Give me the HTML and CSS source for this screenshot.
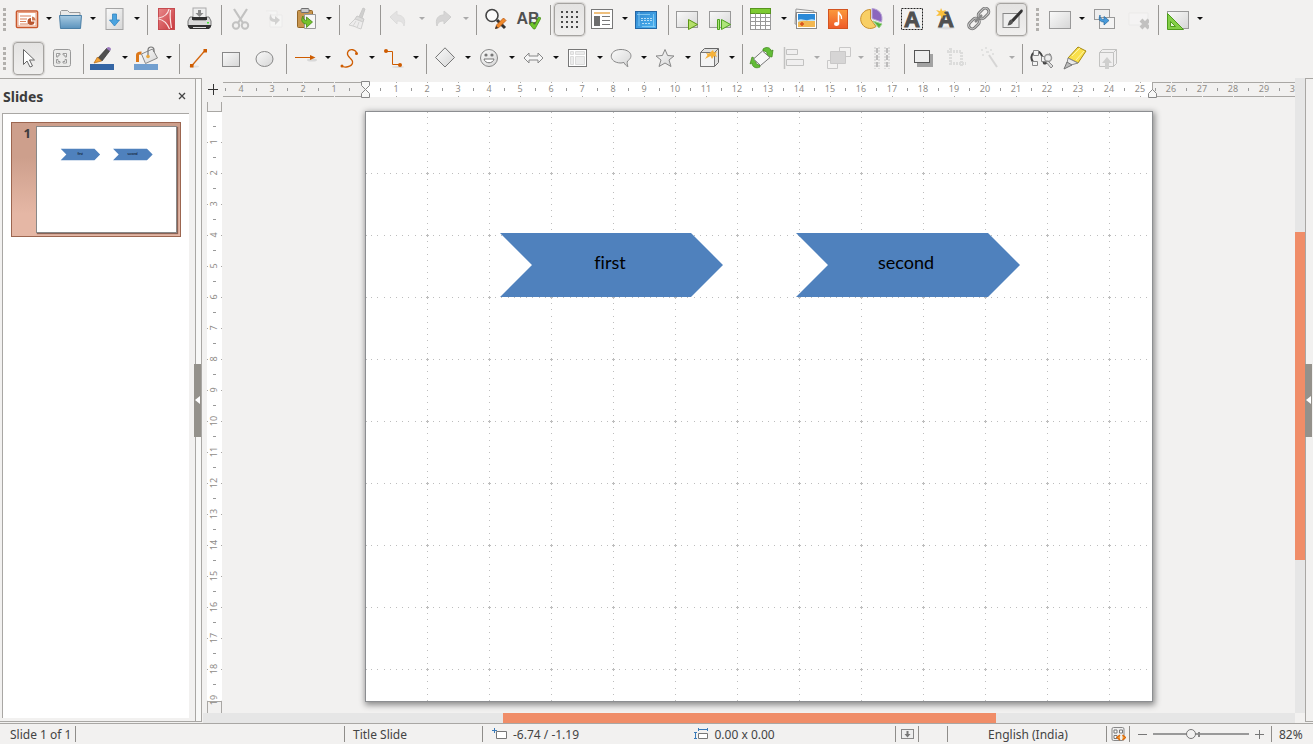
FILE: index.html
```html
<!DOCTYPE html>
<html lang="en">
<head>
<meta charset="utf-8">
<title>Presentation editor</title>
<link rel="stylesheet" href="styles.css">
</head>
<body>
<svg class="defs" aria-hidden="true">
  <defs>
    <linearGradient id="gGrey" x1="0" y1="0" x2="1" y2="1"><stop offset="0" stop-color="#fafafa"/><stop offset="1" stop-color="#d6d6d6"/></linearGradient>
    <linearGradient id="gBlue" x1="0" y1="0" x2="0" y2="1"><stop offset="0" stop-color="#a9cbe2"/><stop offset="1" stop-color="#5b93bd"/></linearGradient>
    <linearGradient id="gSky" x1="0" y1="0" x2="1" y2="1"><stop offset="0" stop-color="#2f86cf"/><stop offset="1" stop-color="#4db4f2"/></linearGradient>
    <linearGradient id="gRed" x1="0" y1="0" x2="1" y2="1"><stop offset="0" stop-color="#e8888a"/><stop offset="1" stop-color="#c8373c"/></linearGradient>
    <linearGradient id="gOrange" x1="0" y1="0" x2="0" y2="1"><stop offset="0" stop-color="#fb9a3c"/><stop offset="1" stop-color="#ee5a28"/></linearGradient>
    <pattern id="grid" x="-1" y="-1" width="62" height="62" patternUnits="userSpaceOnUse">
      <path fill="#bdbdbd" shape-rendering="crispEdges" d="M0 0h2v1H0zM61 0h1v1h-1zM0 1h1v1H0zM0 61h1v1H0zM6 0h1v1H6zM12 0h1v1h-1zM19 0h1v1h-1zM25 0h1v1h-1zM31 0h1v1h-1zM37 0h1v1h-1zM43 0h1v1h-1zM50 0h1v1h-1zM56 0h1v1h-1zM0 6h1v1H0zM0 12h1v1H0zM0 19h1v1H0zM0 25h1v1H0zM0 31h1v1H0zM0 37h1v1H0zM0 43h1v1H0zM0 50h1v1H0zM0 56h1v1H0z"/>
    </pattern>
  </defs>
</svg>

<header class="toolbars">
  <div class="row">
    <div class="group" role="toolbar" aria-label="Standard">
      <i class="grip"></i>
      <button class="tool" aria-label="New"><svg viewBox="0 0 25 24"><rect x="2.500" y="4" width="21" height="16.500" rx="1" fill="#fff" stroke="#c9572c" stroke-width="1.600"/><rect x="4" y="5.500" width="18" height="13.500" fill="none" stroke="#e9a181"/><path d="M6 9h11M6 12h7M6 14.500h6M6 17h8" stroke="#d9805a" stroke-width="1.200"/><path d="M17 11a3.500 3.500 0 1 0 3.500 3.500H17z" fill="#b9552f"/><path d="M18 9.500v4h3.500a4 4 0 0 0-3.500-4z" fill="#cf7a55"/></svg></button><button class="drop" aria-label="New options"></button>
      <button class="tool" aria-label="Open"><svg viewBox="0 0 25 24"><path d="M2.500 10V4.500l1-1h6l2 2h10.500V10" fill="#e9e9e8" stroke="#98999a"/><path d="M1.500 8.500h22l-1 13h-20z" fill="url(#gBlue)" stroke="#4b7fa6"/></svg></button><button class="drop" aria-label="Open options"></button>
      <button class="tool" aria-label="Save"><svg viewBox="0 0 25 24"><rect x="4" y="1.500" width="17" height="21" fill="url(#gGrey)" stroke="#a4a4a4"/><path d="M10.500 7h4v6h3l-5 6-5-6h3z" fill="#4aa3df" stroke="#2e84c1" stroke-width=".8"/></svg></button><button class="drop" aria-label="Save options"></button>
      <i class="sep"></i>
      <button class="tool" aria-label="Export as PDF"><svg viewBox="0 0 25 24"><rect x="4.500" y="1.500" width="16" height="21" fill="url(#gRed)" stroke="#c64b50"/><path d="M15 2c-1 5-5 8-10.500 9M4.500 12c6 1 9 5 11 10M16.500 3c-1 7 0 12 1 18" fill="none" stroke="#fbe4e4" stroke-width="1.200"/></svg></button>
      <button class="tool" aria-label="Print"><svg viewBox="0 0 25 24"><rect x="6" y="1" width="13" height="11" fill="#eee" stroke="#aaa"/><path d="M11 3h3v3h2.500l-4 4-4-4H11z" fill="#8b8b8b"/><path d="M3 10h3v3h13v-3h3l2 4v5H1v-5z" fill="#d9d9d9" stroke="#777"/><path d="M5 10h15v3H5z" fill="#2f2f2f"/><path d="M1 18h23v2l-2 2H3l-2-2z" fill="#333"/><path d="M6 20.500h13" stroke="#ddd"/><rect x="20" y="15" width="2" height="1.500" fill="#4ae03c"/></svg></button>
      <i class="sep"></i>
      <button class="tool off" aria-label="Cut"><svg viewBox="0 0 25 24"><path d="M6 2l9 14M19 2l-9 14" stroke="#777" stroke-width="2.200"/><circle cx="8" cy="18.500" r="3.200" fill="none" stroke="#777" stroke-width="2"/><circle cx="17" cy="18.500" r="3.200" fill="none" stroke="#777" stroke-width="2"/></svg></button>
      <button class="tool faint" aria-label="Copy"><svg viewBox="0 0 25 24"><path d="M5 4h11v6M9 8h12v12H9z" fill="#fff" stroke="#ddd"/><path d="M10 7c-3 5-1 8 4 8v3l5-5-5-4v3c-2 0-4-1-4-5z" fill="#888"/></svg></button>
      <button class="tool" aria-label="Paste"><svg viewBox="0 0 25 24"><rect x="3.500" y="3.500" width="15" height="17" rx="1" fill="#c8964e" stroke="#946627"/><rect x="7" y="1.500" width="8" height="4" rx="1" fill="#c9c9c9" stroke="#6f6f6f"/><path d="M10.500 7.500h11v14h-11z" fill="#f6f6f6" stroke="#999"/><path d="M9 9c-3 5 0 8 3.500 8v3.500l6-5.500-6-5v3.500C10.500 13.500 9 12 9 9z" fill="#74c22f" stroke="#428813" stroke-width=".8"/></svg></button><button class="drop" aria-label="Paste options"></button>
      <i class="sep"></i>
      <button class="tool off" aria-label="Clone formatting"><svg viewBox="0 0 25 24"><path d="M17 1l2 1-3 9-3-1z" fill="#999" stroke="#888"/><path d="M11 9l7 3-1 3-8-3z" fill="#bbb" stroke="#888"/><path d="M9 12l8 3-2 7-3-1-2-1-3-1-4-1z" fill="#e6e6e6" stroke="#999"/><path d="M10 14l-3 5M13 15l-2 6" stroke="#aaa"/></svg></button>
      <i class="sep"></i>
      <button class="tool off" aria-label="Undo"><svg viewBox="0 0 25 24"><path d="M3 10l7-6v4c6 0 9 4 7 11-1-4-3-5-7-5v3z" fill="#ccc" stroke="#bbb"/></svg></button><button class="drop dim" aria-label="Undo history"></button>
      <button class="tool off" aria-label="Redo"><svg viewBox="0 0 25 24"><path d="M20 10l-7-6v4C7 8 4 12 6 19c1-4 3-5 7-5v3z" fill="#aaa" stroke="#999"/></svg></button><button class="drop dim" aria-label="Redo history"></button>
      <i class="sep"></i>
      <button class="tool" aria-label="Find and replace"><svg viewBox="0 0 25 24"><circle cx="9" cy="8.500" r="6" fill="#fafafa" stroke="#444" stroke-width="1.600"/><path d="M14 13l8 8" stroke="#333" stroke-width="3"/><path d="M12.500 21.500l1-3.500 7-7 2.500 2.500-7 7z" fill="#f18a2b" stroke="#b95813" stroke-width=".8"/><path d="M12 22l1.200-3 2 2z" fill="#333"/></svg></button>
      <button class="tool" aria-label="Spelling"><svg viewBox="0 0 25 24"><text x="12" y="17" class="ab">AB</text><path d="M13.500 17l3-2 2 3 4-8 2.500 1-6 11h-1.500z" fill="#6ec52b" stroke="#3f8a12" stroke-width=".7"/></svg></button>
      <i class="sep"></i>
      <button class="tool on" aria-label="Display grid" aria-pressed="true"><svg viewBox="0 0 25 24"><path d="M4 5h18M4 10h18M4 15h18M4 20h18" stroke="#4a4a4a" stroke-width="2" stroke-dasharray="2 3"/></svg></button>
      <button class="tool" aria-label="Display views"><svg viewBox="0 0 25 24"><rect x="1.500" y="2.500" width="21" height="19" fill="#fff" stroke="#777"/><path d="M4 6h16" stroke="#efc07d" stroke-width="2"/><path d="M4 9h6v10H4z" fill="#6d6d6d"/><path d="M12 9.500h8M12 13.500h8M12 17.500h8" stroke="#777"/></svg></button><button class="drop" aria-label="View options"></button>
      <button class="tool" aria-label="Master slide"><svg viewBox="0 0 25 24"><rect x="1.500" y="4.500" width="21" height="17" fill="url(#gSky)" stroke="#2467a5"/><path d="M3 7.500h13M5 5v14M8 19.500h13M19.500 7v13" stroke="#8fd0f6" stroke-width=".8"/><path d="M7 11.500h11M7 13.500h11M8 16.500h8" stroke="#d5edfb" stroke-width=".8" stroke-dasharray="2 1"/></svg></button>
      <i class="sep"></i>
      <button class="tool" aria-label="Start from first slide"><svg viewBox="0 0 25 24"><rect x="1.500" y="4.500" width="21" height="16" fill="url(#gGrey)" stroke="#999"/><path d="M13.500 12.500v10l9-5z" fill="#b5e06a" stroke="#5c9614"/></svg></button>
      <button class="tool" aria-label="Start from current slide"><svg viewBox="0 0 25 24"><rect x="1.500" y="4.500" width="21" height="16" fill="url(#gGrey)" stroke="#999"/><path d="M9.500 12.500h2v10h-2zM13.500 12.500v10l9-5z" fill="#aee57b" stroke="#4da21f"/></svg></button>
      <i class="sep"></i>
      <button class="tool" aria-label="Insert table"><svg viewBox="0 0 25 24"><rect x="1.500" y="1.500" width="20" height="21" fill="#fff" stroke="#999"/><rect x="1.500" y="1.500" width="20" height="5" fill="#7dcb32" stroke="#57951f"/><path d="M2 10.500h20M2 14.500h20M2 18.500h20M6.500 6.500v16M11.500 6.500v16M16.500 6.500v16" stroke="#999"/></svg></button><button class="drop" aria-label="Table options"></button>
      <button class="tool" aria-label="Insert image"><svg viewBox="0 0 25 24"><path d="M3 2l18 2-1 15-18-2z" fill="#f4f4f4" stroke="#999"/><rect x="3.500" y="5.500" width="20" height="16" fill="#fff" stroke="#888"/><path d="M5 7h17v8H5z" fill="#2b8ad8"/><path d="M5 13c4-2 7 1 10 0s5-1 7 0v2H5z" fill="#bfe3f7"/><path d="M5 15c4-2 8-1 17-1v6H5z" fill="#f2b751"/><path d="M9 15v4M7 17h4" stroke="#d84f1c" stroke-width="1.500"/></svg></button>
      <button class="tool" aria-label="Insert audio or video"><svg viewBox="0 0 25 24"><rect x="2.500" y="2.500" width="19" height="19" fill="url(#gOrange)" stroke="#d35420"/><path d="M12.500 4.500v13M12.500 5c1 3 4 3 3 7" fill="none" stroke="#fff" stroke-width="1.500"/><ellipse cx="10.500" cy="17" rx="2.500" ry="2" fill="#fff"/></svg></button>
      <button class="tool" aria-label="Insert chart"><svg viewBox="0 0 25 24"><path d="M11.500 2.500a9.500 9.500 0 1 0 5.500 17l-5.500-7.500z" fill="#f8cf66" stroke="#c98f2d"/><path d="M13 1.500v10l9.500 3.500c2-7-2-13-9.500-13.500z" fill="#8b66bd" stroke="#b9a5d4"/><path d="M14 14l9 3-3 4z" fill="#55b13b" stroke="#9bd289"/></svg></button>
      <i class="sep"></i>
      <button class="tool" aria-label="Insert text box"><svg viewBox="0 0 25 24"><rect x="1.500" y="1.500" width="21" height="21" fill="none" stroke="#222" stroke-dasharray="2 1"/><text x="12" y="20" class="glyph">A</text></svg></button>
      <button class="tool" aria-label="Insert fontwork"><svg viewBox="0 0 25 24"><ellipse cx="13" cy="21" rx="9" ry="1.500" fill="#ddd"/><text x="13" y="20" class="glyph">A</text><path d="M8 1l1.500 3L13 3l-2 3 3 2-4 .5L9 12 7.500 8.500 3 9l3-3-3-3 4 1z" fill="#f9bf3c"/></svg></button>
      <button class="tool" aria-label="Insert hyperlink"><svg viewBox="0 0 25 24"><g fill="none"><rect x="11.500" y="3" width="12" height="7" rx="3.500" transform="rotate(-45 17.500 6.500)" stroke="#777" stroke-width="3"/><rect x="2" y="13" width="12" height="7" rx="3.500" transform="rotate(-45 8 16.500)" stroke="#777" stroke-width="3"/><rect x="11.500" y="3" width="12" height="7" rx="3.500" transform="rotate(-45 17.500 6.500)" stroke="#ccc"/><rect x="2" y="13" width="12" height="7" rx="3.500" transform="rotate(-45 8 16.500)" stroke="#ccc"/><path d="M9 15l7-7" stroke="#888" stroke-width="2.500"/></g></svg></button>
      <button class="tool on" aria-label="Show draw functions" aria-pressed="true"><svg viewBox="0 0 25 24"><rect x="4" y="6.500" width="16" height="14" fill="#eee" stroke="#888"/><path d="M22 2.500c2 0 2 1 1.500 2.500l-9 10-2.500-2z" fill="#333"/><path d="M12 12.500l2.500 2c-1 3-4 4-6 4 1-2 1-5 3.500-6z" fill="#555"/></svg></button>
    </div>
    <div class="group" role="toolbar" aria-label="Presentation">
      <i class="grip"></i>
      <button class="tool" aria-label="New slide"><svg viewBox="0 0 25 24"><rect x="2.500" y="4.500" width="21" height="17" fill="url(#gGrey)" stroke="#999"/></svg></button><button class="drop" aria-label="Slide layouts"></button>
      <button class="tool" aria-label="Duplicate slide"><svg viewBox="0 0 25 24"><rect x="3.500" y="2.500" width="15" height="10" fill="#eee" stroke="#999"/><rect x="8.500" y="10.500" width="15" height="11" fill="#f3f3f3" stroke="#999"/><path d="M9 8c-2 5 0 7 4 7v3l5-4.500-5-4v3c-2 0-4-1-4-4.500z" fill="#4a9bda" stroke="#22679f" stroke-width=".7"/></svg></button>
      <button class="tool faint" aria-label="Delete slide"><svg viewBox="0 0 25 24"><path d="M5 6h19v12H5z" fill="#fafafa" stroke="#ddd"/><path d="M17 13l8 8M25 13l-8 8" stroke="#555" stroke-width="4"/></svg></button>
      <i class="sep"></i>
      <button class="tool" aria-label="Slide layout"><svg viewBox="0 0 25 24"><rect x="2.500" y="4.500" width="21" height="17" fill="url(#gGrey)" stroke="#999"/><path d="M2.500 6.500v16h16z" fill="#83cf47" stroke="#4e9c1c"/><path d="M5.500 14.500v5h5z" fill="#e3f4d5" stroke="#4e9c1c"/></svg></button><button class="drop" aria-label="Layout options"></button>
    </div>
  </div>
  <div class="row">
    <div class="group drawing" role="toolbar" aria-label="Drawing">
      <i class="grip"></i>
      <button class="tool on" aria-label="Select" aria-pressed="true"><svg viewBox="0 0 25 24"><path d="M7.500 3.500v15l3.500-3.500 3 6 2.500-1-3-6h5z" fill="#fff" stroke="#666"/></svg></button>
      <button class="tool" aria-label="Zoom and pan"><svg viewBox="0 0 25 24"><rect x="4.500" y="3.500" width="17" height="17" rx="2" fill="#ebebea" stroke="#999"/><path d="M7.500 11V7.500H11V9H9v2zM14 7.500h3.500V11H16V9h-2zM7.500 13.500V17H11v-1.500H9v-2zM17.500 13.500V17H14v-1.500h2v-2z" fill="#fff" stroke="#888" stroke-width=".8"/></svg></button>
      <i class="sep"></i>
      <button class="tool" aria-label="Line color"><svg viewBox="0 0 25 24"><path d="M8 12L17 2l3 2.500L12 15z" fill="#505050" stroke="#333" stroke-width=".7"/><path d="M16.500 2.500l1.500-1.500c2 0 3 1 3 2.500L19.500 5z" fill="#9b79bd"/><path d="M4 17l3.500-6 4 4z" fill="#f4a338" stroke="#b06a15" stroke-width=".7"/><rect x="0" y="18" width="24" height="6" fill="#3465a4"/></svg></button><button class="drop" aria-label="Line colors"></button>
      <button class="tool" aria-label="Fill color"><svg viewBox="0 0 25 24"><path d="M3.500 16V9c0-2 1.500-2 4-2" fill="none" stroke="#dc7718" stroke-width="3"/><path d="M7.500 8l11-5 5 9-12 5.500z" fill="url(#gGrey)" stroke="#888"/><path d="M14 10V4c0-4 6-4 6 0v2" fill="none" stroke="#777" stroke-width="1.200"/><circle cx="14" cy="10.500" r="1.800" fill="#e9a63c"/><rect x="0" y="18" width="24" height="6" fill="#729fcf"/></svg></button><button class="drop" aria-label="Fill colors"></button>
      <i class="sep"></i>
      <button class="tool" aria-label="Line"><svg viewBox="0 0 25 24"><ellipse cx="8" cy="20.500" rx="5" ry="1" fill="#ddd"/><path d="M6 19.500L19 4.500" stroke="#d4660e" stroke-width="1.300"/><path d="M4 18h3.500v3.500H4zM17.500 3H21v3.500h-3.500z" fill="#ce5c00"/></svg></button>
      <button class="tool" aria-label="Rectangle"><svg viewBox="0 0 25 24"><rect x="3.500" y="6.500" width="17" height="14" fill="url(#gGrey)" stroke="#888"/></svg></button>
      <button class="tool" aria-label="Ellipse"><svg viewBox="0 0 25 24"><ellipse cx="12.500" cy="13" rx="8.500" ry="7.500" fill="url(#gGrey)" stroke="#888"/></svg></button>
      <i class="sep"></i>
      <button class="tool" aria-label="Line ends with arrow"><svg viewBox="0 0 25 24"><ellipse cx="19" cy="14" rx="5" ry="1.500" fill="#d8d8d8"/><path d="M2 11.500h15" stroke="#ce5c00"/><path d="M17 9l5.500 2.500-5.500 2.500z" fill="#ce5c00"/></svg></button><button class="drop" aria-label="Line styles"></button>
      <button class="tool" aria-label="Curve"><svg viewBox="0 0 25 24"><path d="M19.500 8c1-4-8-7-9-1-1 5 6 5 5 10-1 4-8 5-11 3" fill="none" stroke="#ce5c00" stroke-width="1.300"/><circle cx="19.500" cy="7.500" r="1.500" fill="#ce5c00"/><circle cx="5" cy="20" r="1.500" fill="#ce5c00"/></svg></button><button class="drop" aria-label="Curve styles"></button>
      <button class="tool" aria-label="Connector"><svg viewBox="0 0 25 24"><ellipse cx="17" cy="21" rx="6" ry="1" fill="#ddd"/><path d="M5 5.500h6.500v13h7" fill="none" stroke="#ce5c00"/><circle cx="5" cy="5" r="2" fill="#ce5c00"/><circle cx="19" cy="19" r="2" fill="#ce5c00"/></svg></button><button class="drop" aria-label="Connector styles"></button>
      <i class="sep"></i>
      <button class="tool" aria-label="Basic shapes"><svg viewBox="0 0 25 24"><path d="M12 1.800l9.500 9.700L12 21 2.500 11.500z" fill="url(#gGrey)" stroke="#777"/></svg></button><button class="drop" aria-label="More basic shapes"></button>
      <button class="tool" aria-label="Symbol shapes"><svg viewBox="0 0 25 24"><circle cx="12" cy="12" r="8.500" fill="url(#gGrey)" stroke="#888"/><circle cx="9" cy="9" r="1.600" fill="#777"/><circle cx="15" cy="9" r="1.600" fill="#777"/><path d="M7 13h10c-1 5-9 5-10 0z" fill="#fff" stroke="#777"/></svg></button><button class="drop" aria-label="More symbols"></button>
      <button class="tool" aria-label="Block arrows"><svg viewBox="0 0 25 24"><path d="M3 12l5-5v3h9V7l5 5-5 5v-3H8v3z" fill="#f6f6f6" stroke="#888"/></svg></button><button class="drop" aria-label="More arrows"></button>
      <button class="tool" aria-label="Flowchart"><svg viewBox="0 0 25 24"><rect x="3.500" y="3.500" width="18" height="17" fill="#fff" stroke="#777"/><path d="M5.500 5.500h3v3h-3zM10.500 5.500h9v3h-9zM5.500 10.500h3v8h-3zM10.500 10.500h9v8h-9z" fill="#ececec" stroke="#dcdcdc"/></svg></button><button class="drop" aria-label="More flowchart shapes"></button>
      <button class="tool" aria-label="Callouts"><svg viewBox="0 0 25 24"><path d="M12 3.500c-13 0-13 13.500 0 13.500l3-.5c1 2 2 3.500 4 4-1-2-1-3.500-.5-5.500C25 11 22 3.500 12 3.500z" fill="url(#gGrey)" stroke="#888"/></svg></button><button class="drop" aria-label="More callouts"></button>
      <button class="tool" aria-label="Stars"><svg viewBox="0 0 25 24"><path d="M12 3.500l2.600 6 6.400.5-5 4 2 6.500-6-3.500-6 3.500 2-6.500-5-4 6.400-.5z" fill="url(#gGrey)" stroke="#888"/></svg></button><button class="drop" aria-label="More stars"></button>
      <button class="tool" aria-label="3D objects"><svg viewBox="0 0 25 24"><path d="M3.500 6.500l4-4h14v14l-4 4h-14z" fill="#e0e0df" stroke="#666"/><path d="M3.500 6.500h14v14h-14z" fill="#f4f4f4" stroke="#777"/><path d="M17.500 6.500l4-4" stroke="#777"/><path d="M16 4l1 2.500 3-1-1.500 2.500L20 11l-3-1-2 3-1.500-3L8 13l2.500-4L9 7l3 .5z" fill="#f6b23a"/></svg></button><button class="drop" aria-label="More 3D objects"></button>
      <i class="sep"></i>
      <button class="tool" aria-label="Rotate"><svg viewBox="0 0 25 24"><path d="M14 3c4-3 8-1 8 2l2-1-1 7-6-1 1-2c0-2-1-3-4-3zM11 21c-4 2-8 0-8-4l-2 1 2-7 6 3-2 2c0 2 1 3 4 3z" fill="#63bd37" stroke="#3c8617" stroke-width=".7"/><path d="M13.500 5l7.500 6.500-9.500 8-7-6.500z" fill="#f7f7f7" stroke="#777"/></svg></button>
      <button class="tool off" aria-label="Align"><svg viewBox="0 0 25 24"><path d="M2.500 1v22" stroke="#777" stroke-width="1.500"/><path d="M4.500 3.500h11v5h-11zM4.500 13.500h17v6h-17z" fill="#eee" stroke="#777"/></svg></button><button class="drop dim" aria-label="Alignment"></button>
      <button class="tool off" aria-label="Arrange"><svg viewBox="0 0 25 24"><path d="M13.500 1.500h11v9h-11zM1.500 14.500h10v8h-10z" fill="#f5f5f5" stroke="#888"/><path d="M4.500 5.500h15v12h-15z" fill="#aaa" stroke="#888"/></svg></button><button class="drop dim" aria-label="Arrangement"></button>
      <button class="tool off" aria-label="Distribute"><svg viewBox="0 0 25 24"><path d="M5 1v22M9 1v22M15 1v22M19 1v22" stroke="#888" stroke-dasharray="2 1"/><path d="M7 2v20M17 2v20" stroke="#666" stroke-width="2" stroke-dasharray="5 2"/></svg></button>
      <i class="sep"></i>
      <button class="tool" aria-label="Shadow"><svg viewBox="0 0 25 24"><path d="M6 8h16v13H6z" fill="#a2a2a2"/><rect x="3.500" y="4.500" width="15" height="12" fill="#eee" stroke="#555"/></svg></button>
      <button class="tool off" aria-label="Crop"><svg viewBox="0 0 25 24"><path d="M6.500 2v15.500H22M3 5.500h14.500V21" fill="none" stroke="#bbb" stroke-width="3" stroke-dasharray="2 1"/></svg></button>
      <button class="tool off" aria-label="Filter"><svg viewBox="0 0 25 24"><path d="M12 9l8 12" stroke="#aaa" stroke-width="2"/><path d="M4 4h2M8 2h2M13 4h2M5 9h2M9 6h3M15 8h2" stroke="#bbb" stroke-width="1.500"/></svg></button><button class="drop dim" aria-label="Filters"></button>
      <i class="sep"></i>
      <button class="tool" aria-label="Edit points"><svg viewBox="0 0 25 24"><path d="M4 16C-1 8 8 2 12 8s1 11 5 9 6-6 3-9" fill="none" stroke="#444" stroke-width="2"/><path d="M4.500 4.500h5v5h-5zM3.500 15.500h5v4h-5zM12.500 10.500h5v5h-5z" fill="#f4f4f4" stroke="#888"/><circle cx="19" cy="12" r="3.500" fill="#eee" stroke="#999" stroke-width="1.500"/><path d="M17 16l5 6 2-2-5-5z" fill="#ddd" stroke="#888"/></svg></button>
      <button class="tool" aria-label="Glue points"><svg viewBox="0 0 25 24"><path d="M6 12L16 1l8 4-8 12z" fill="#fae04b" stroke="#a68a12"/><path d="M10 10l8-8M14 14l8-9" stroke="#fdf3a6"/><path d="M6 12l10 5-7 2-4-2z" fill="#e9e9e9" stroke="#888"/><path d="M2 23L5 16l5 3z" fill="#bbb" stroke="#777"/></svg></button>
      <button class="tool off" aria-label="Toggle extrusion"><svg viewBox="0 0 25 24"><path d="M4.500 6.500l3-3h14v14l-3 3h-14z" fill="#eee" stroke="#777"/><path d="M4.500 6.500h14v14M18.500 6.500l3-3" fill="none" stroke="#777"/><path d="M12 11l5 6h-3v6h-4v-6H7z" fill="#999"/></svg></button>
    </div>
  </div>
</header>

<div class="workspace">
  <aside class="sidebar">
    <section class="slides">
      <div class="slides-head"><h1>Slides</h1><button class="close" aria-label="Close panel"><svg viewBox="0 0 8 8"><path d="M1 1l6 6M7 1L1 7" stroke="#444" stroke-width="1.300"/></svg></button></div>
      <div class="slide-list">
        <button class="slide-item">
          <span class="slide-no">1</span>
          <svg class="thumb" viewBox="0 0 786 589"><use href="#shapes"/></svg>
        </button>
      </div>
    </section>
    <div class="splitter"><button class="handle" aria-label="Hide slide panel"></button></div>
  </aside>

  <main class="editor">
    <div class="corner"><svg viewBox="0 0 10 11"><path d="M5.500 0v11M0 5.500h10" stroke="#333"/></svg></div>
    <div class="ruler-h"><svg id="rulerH"></svg></div>
    <div class="ruler-v"><svg id="rulerV"></svg></div>
    <div class="canvas">
      <svg class="page" viewBox="0 0 786 589">
        <rect width="786" height="589" fill="url(#grid)"/>
        <g id="shapes">
          <path d="M134 121h191l32 32-32 32H134l32-32z" fill="#4f81bd"/>
          <path d="M430 121h192l32 32-32 32H430l32-32z" fill="#4f81bd"/>
          <text x="244" y="157" class="label">first</text>
          <text x="540" y="157" class="label">second</text>
        </g>
      </svg>
    </div>
    <div class="scroll-v"><div class="thumb-v"></div></div>
    <div class="scroll-h"><div class="thumb-h"></div></div>
  </main>

  <div class="right-edge"><button class="handle" aria-label="Show sidebar"></button></div>
</div>

<footer class="status">
  <span class="cell count">Slide 1 of 1</span>
  <span class="cell"></span>
  <span class="cell layout">Title Slide</span>
  <span class="cell metrics">
    <span class="metric"><svg viewBox="0 0 15 12"><path d="M4.500 3.500h10v7h-10z" fill="#fff" stroke="#777"/><path d="M0 2.500h5M2.500 0v5" stroke="#3a7ab8"/></svg>-6.74 / -1.19</span>
    <span class="metric"><svg viewBox="0 0 15 12"><path d="M4.500 5.500h9v5h-9z" fill="#fff" stroke="#777"/><path d="M4.500 1.500h9M4.500 0v3M13.500 0v3M1.500 5v6M0 4.500h3M0 10.500h3" stroke="#3a7ab8"/></svg>0.00 x 0.00</span>
  </span>
  <span class="cell icon"><svg viewBox="0 0 15 14"><rect x="1.500" y="2.500" width="12" height="9" fill="#eee" stroke="#888"/><path d="M6.500 4h2v3h2l-3 3.500L4.500 7h2z" fill="#777"/></svg></span>
  <span class="cell"></span>
  <span class="cell lang">English (India)</span>
  <span class="cell icon"><svg viewBox="0 0 15 14"><rect x="1" y=".5" width="12" height="13" rx="1.500" fill="#eee" stroke="#888"/><path d="M3 3h3v3H3zM8.500 3h3v3h-3zM3 8.500h3v3H3z" fill="#fff" stroke="#777"/><path d="M9 8l-3 2.500L9 13M11.500 8l3 2.500-3 2.500" fill="#f0a13e" stroke="#dc6a0b" stroke-width="1.500"/></svg></span>
  <span class="cell zoom">
    <button class="step" aria-label="Zoom out"><svg viewBox="0 0 9 9"><path d="M0 4.500h9" stroke="#777"/></svg></button>
    <input type="range" min="0" max="100" value="38" aria-label="Zoom">
    <button class="step" aria-label="Zoom in"><svg viewBox="0 0 9 9"><path d="M0 4.500h9M4.500 0v9" stroke="#777"/></svg></button>
  </span>
  <span class="cell percent">82%</span>
</footer>
<script src="rulers.js"></script>
</body>
</html>
```

FILE: rulers.js
```js
// Draws both rulers; one centimetre is 31px at the current zoom level.
const CM = 31;

function draw(svg, vertical, length, from, to) {
  const place = (a, b, w, h, fill) => {
    const [x, y, ww, hh] = vertical ? [b, a, h, w] : [a, b, w, h];
    return `<rect x="${x}" y="${y}" width="${ww}" height="${hh}" fill="${fill}"/>`;
  };
  const line = '#a9a7a4';
  let out = place(1, 0, length, 15, '#fff');
  for (const start of [-3000, length + 1]) {
    out += place(start, 0, 3000, 1, line) + place(start, 14, 3000, 1, line);
  }
  out += place(0, 0, 1, 15, line) + place(length + 1, 0, 1, 15, line);
  for (let i = from; i <= to; i++) {
    const at = i * CM;
    if (i !== 0) {
      const inside = at > 0 && at < length;
      out += place(at, 0, 1, 1, inside ? line : '#f2f1f0') + place(at, 14, 1, 1, inside ? line : '#f2f1f0');
      const n = Math.abs(i);
      out += vertical
        ? `<text transform="translate(10 ${at}) rotate(-90)">${n}</text>`
        : `<text x="${at}" y="10">${n}</text>`;
    }
    if (at + 15 < length || !vertical) out += place(at + 15, 6, 1, 3, '#999');
  }
  if (!vertical) {
    out += place(from * CM - 16, 6, 1, 3, '#999');
    out += '<path d="M-3.500 -.5h8v4l-4 4-4-4zM-3.500 15.500h8v-4l-4-4-4 4z" fill="#f8f8f7" stroke="#888"/>';
    out += `<path d="M${length - 2.5} 15.500h8v-4l-4-4-4 4z" fill="#f8f8f7" stroke="#888"/>`;
  }
  svg.innerHTML = out;
}

draw(document.getElementById('rulerH'), false, 786, -4, 30);
draw(document.getElementById('rulerV'), true, 589, 0, 19);
```

FILE: styles.css
```css
* { box-sizing: border-box; }

body {
  margin: 0;
  height: 100vh;
  display: flex;
  flex-direction: column;
  overflow: hidden;
  background: #f2f1f0;
  color: #3c3c3c;
  font: 12px "Noto Sans", "Open Sans", sans-serif;
}

button {
  border: 0;
  padding: 0;
  background: none;
  font: inherit;
  color: inherit;
}

svg { display: block; }
.defs { position: absolute; width: 0; height: 0; }

/* Toolbars */
.row { display: flex; gap: 5px; height: 39px; }
.group { display: flex; height: 38px; align-items: center; }

.grip {
  width: 3px;
  height: 23px;
  margin: 0 4px 0 3px;
  background: repeating-linear-gradient(#b2b0ad 0 3px, transparent 3px 5px);
}
.drawing .grip { margin-right: 6px; }

.tool {
  width: 33px;
  height: 38px;
  flex: none;
  display: flex;
  align-items: center;
  justify-content: center;
}
.tool svg { width: 25px; height: 24px; flex: none; }
.tool.off { opacity: .38; }
.tool.faint { opacity: .3; }
.tool.on {
  width: 31px;
  height: 33px;
  margin: 0 1px;
  border: 1px solid #a5a3a0;
  border-radius: 4px;
  background: linear-gradient(#e4e3e2, #f0efee);
  box-shadow: 0 0 1px 1px #d5d3d1;
}

.drop { width: 11px; height: 38px; flex: none; }
.drop::before {
  content: "";
  display: block;
  margin: 0 auto 2px;
  width: 0;
  border: 3px solid transparent;
  border-top-color: #111;
  border-bottom: 0;
}
.drop.dim::before { border-top-color: #aaa; }

.sep { width: 1px; height: 30px; margin: 2px 2px 0 5px; background: #999794; }

.ab, .glyph { font: bold 16px "Liberation Sans", sans-serif; fill: #505050; text-anchor: middle; }
.glyph { font-size: 22px; stroke: #505050; }

/* Workspace */
.workspace { flex: 1; min-height: 0; display: flex; }

.sidebar {
  width: 202px;
  margin-bottom: 1px;
  display: flex;
  border: 1px solid #a9a7a4;
  border-left: 0;
}
.slides { flex: 1; display: flex; flex-direction: column; padding: 0 6px 3px 2px; }
.slides-head { height: 34px; display: flex; align-items: center; justify-content: space-between; }
.slides-head h1 { margin: 0 0 0 1px; padding-top: 2px; font-size: 14px; line-height: 20px; }
.close { width: 14px; height: 14px; display: grid; place-items: center; }
.close svg { width: 8px; height: 8px; }

.slide-list {
  flex: 1;
  padding: 8px;
  border: 1px solid #a9a7a4;
  border-right: 0;
  border-bottom: 0;
  background: #fff;
}
.slide-item {
  width: 100%;
  display: flex;
  align-items: flex-start;
  padding: 3px;
  border: 1px solid #9c6650;
  background: linear-gradient(#cd9f8c 30%, #e5b7a5 80%);
}
.slide-no { flex: 1; padding-right: 5px; text-align: right; font-weight: bold; font-size: 13px; line-height: 14px; }
.thumb { width: 141px; height: 107px; border: 1px solid #888; background: #fff; box-shadow: 1px 1px 1px #8b6254; }

.splitter { width: 6px; display: flex; align-items: center; border-left: 1px solid #a9a7a4; background: #f8f8f7; }
.handle { width: 7px; height: 73px; flex: none; display: grid; place-items: center; background: #94918b; }
.splitter .handle { margin-left: -2px; }
.handle::before { content: ""; border: 4px solid transparent; border-right: 5px solid #fff; border-left: 0; }

.editor {
  flex: 1;
  min-width: 0;
  display: grid;
  grid-template-columns: 21px 1fr 10px;
  grid-template-rows: 24px 1fr 10px;
}
.corner { padding: 6px 0 0 6px; }
.corner svg { width: 10px; height: 11px; }
.ruler-h { min-width: 0; height: 24px; padding-top: 4px; display: flex; justify-content: center; overflow: hidden; }
.ruler-h svg { width: 788px; height: 15px; flex: none; overflow: visible; }
.ruler-v { grid-row: 2; padding: 9px 0 0 5px; overflow: hidden; }
.ruler-v svg { width: 15px; height: 591px; overflow: visible; }
.ruler-h text, .ruler-v text { font-size: 9px; text-anchor: middle; fill: #8f8c88; }

.canvas { grid-area: 2 / 2; min-width: 0; padding-top: 9px; display: flex; justify-content: center; align-items: flex-start; overflow: hidden; }
.page {
  width: 788px;
  height: 591px;
  flex: none;
  border: 1px solid #8c8e91;
  background: #fff;
  box-shadow: 1px 2px 6px 1px #8a8a8a;
}
.label { font: 18px Lato, sans-serif; font-variant-ligatures: none; text-anchor: middle; fill: #000; }

.scroll-v { grid-area: 1 / 3 / 3 / 4; background: #e6e6e6; }
.thumb-v { height: 328px; margin-top: 154px; background: #f08d68; }
.scroll-h { grid-area: 3 / 1 / 4 / 3; margin-left: 1px; background: #e6e6e6; }
.thumb-h { width: 493px; height: 10px; margin-left: 300px; background: #f08d68; }

.right-edge { width: 8px; margin-bottom: 1px; display: flex; align-items: center; border: 1px solid #a9a7a4; border-right: 0; }
.right-edge .handle { margin-left: -1px; }

/* Status bar */
.status {
  height: 21px;
  display: grid;
  grid-template-columns: 76px 1fr 138px 413px 23px 29px 159px 23px 142px 41px;
  align-items: center;
  border-top: 1px solid #a9a7a4;
  color: #444;
}
.cell { height: 16px; display: flex; align-items: center; border-right: 1px solid #8f8d8a; white-space: nowrap; }
.count { padding-left: 10px; }
.layout { padding-left: 8px; }
.metrics { padding-left: 9px; }
.metric { flex: 1; display: flex; align-items: center; gap: 6px; }
.metric svg { width: 15px; height: 12px; }
.icon { justify-content: center; }
.icon svg { width: 15px; height: 14px; }
.lang { justify-content: center; padding-left: 2px; }
.zoom { padding: 0 7px 0 8px; gap: 6px; }
.step svg { width: 9px; height: 9px; }
.percent { padding-left: 7px; border: 0; }

input[type="range"] {
  flex: 1;
  min-width: 0;
  height: 14px;
  margin: 0;
  appearance: none;
  background:
    linear-gradient(#888, #888) 48% 50% / 2px 5px no-repeat,
    linear-gradient(#999, #999) 0 50% / 100% 2px no-repeat;
}
input[type="range"]::-webkit-slider-thumb {
  appearance: none;
  width: 10px;
  height: 10px;
  border: 1px solid #777;
  border-radius: 50%;
  background: #f2f1f0;
}
```
